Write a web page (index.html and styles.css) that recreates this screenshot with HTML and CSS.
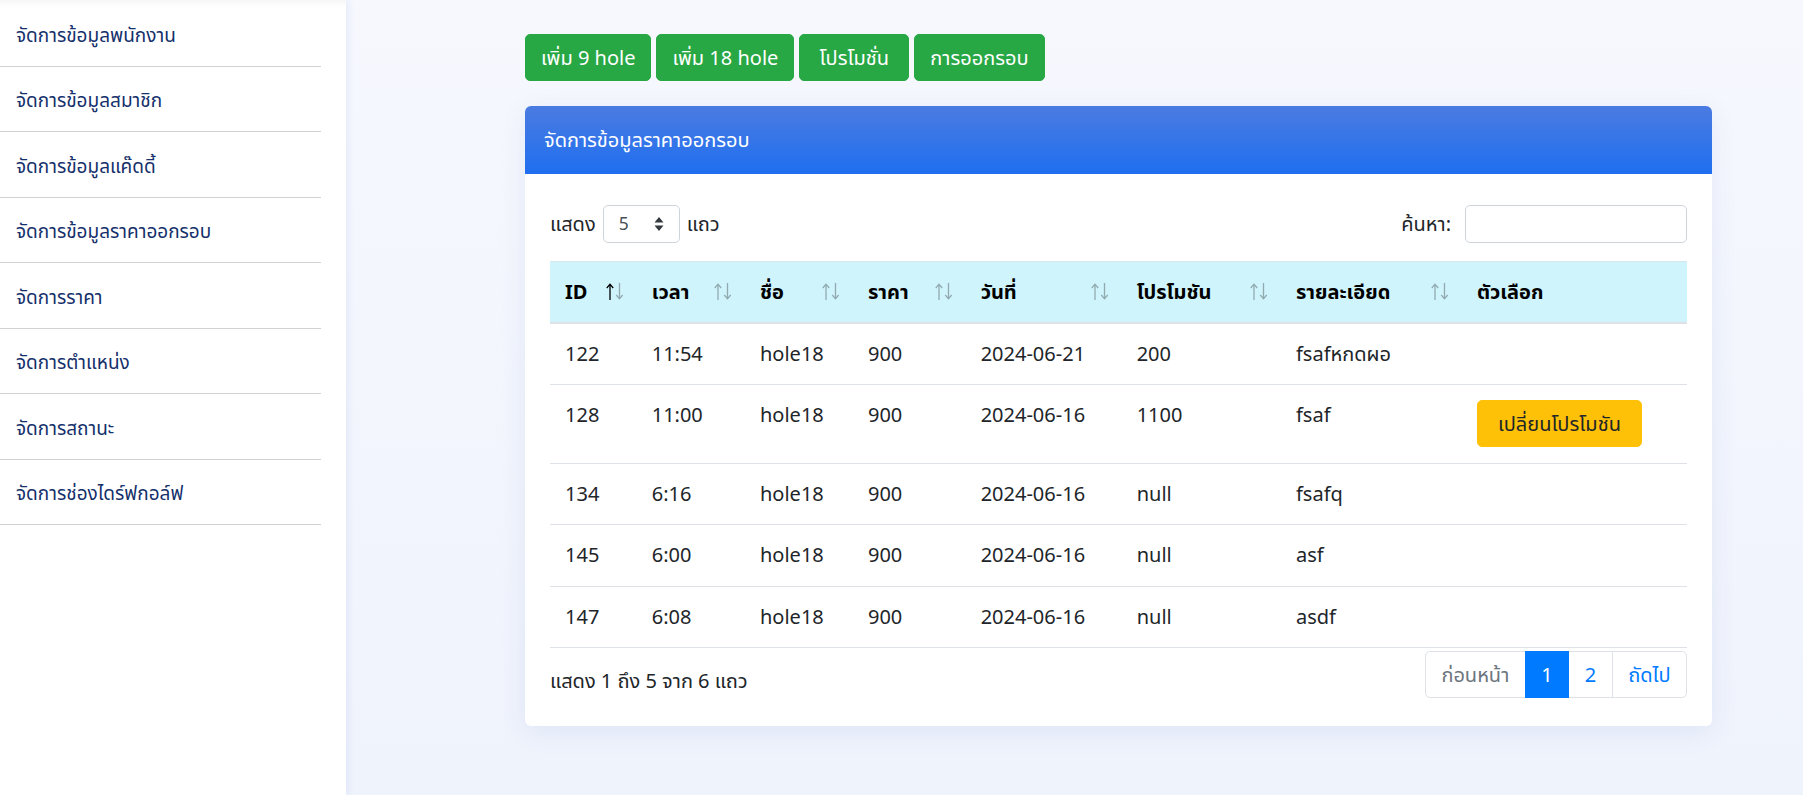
FILE: index.html
```html
<!DOCTYPE html>
<html lang="th">
<head>
<meta charset="utf-8">
<title>จัดการข้อมูลราคาออกรอบ</title>
<link rel="stylesheet" href="styles.css">
</head>
<body>
<div class="layout">
  <aside class="sidebar">
    <ul class="nav">
      <li><a class="nav-link">จัดการข้อมูลพนักงาน</a></li>
      <li><a class="nav-link">จัดการข้อมูลสมาชิก</a></li>
      <li><a class="nav-link">จัดการข้อมูลแค๊ดดี้</a></li>
      <li><a class="nav-link">จัดการข้อมูลราคาออกรอบ</a></li>
      <li><a class="nav-link">จัดการราคา</a></li>
      <li><a class="nav-link">จัดการตำแหน่ง</a></li>
      <li><a class="nav-link">จัดการสถานะ</a></li>
      <li><a class="nav-link">จัดการช่องไดร์ฟกอล์ฟ</a></li>
    </ul>
  </aside>
  <main class="main">
    <div class="actions">
      <button class="btn btn-green">เพิ่ม 9 hole</button>
      <button class="btn btn-green">เพิ่ม 18 hole</button>
      <button class="btn btn-green btn-promo">โปรโมชั่น</button>
      <button class="btn btn-green btn-round">การออกรอบ</button>
    </div>
    <section class="card">
      <div class="card-header">จัดการข้อมูลราคาออกรอบ</div>
      <div class="card-body">
        <div class="dt-top">
          <label class="dt-length">แสดง <span class="select"><span class="select-val">5</span><svg class="select-arrows" width="10" height="14" viewBox="0 0 10 14"><path d="M5 0 L9.5 5.5 L0.5 5.5 Z M5 14 L9.5 8.5 L0.5 8.5 Z" fill="#343a40"/></svg></span> แถว</label>
          <label class="dt-search">ค้นหา: <span class="search-input"></span></label>
        </div>
        <table class="dt-table">
          <colgroup>
            <col class="c-id"><col class="c-time"><col class="c-name"><col class="c-price"><col class="c-date"><col class="c-promo"><col class="c-detail"><col class="c-opt">
          </colgroup>
          <thead>
            <tr>
              <th class="sort sort-asc">ID<svg class="sort-icon" width="18" height="17" viewBox="0 0 18 17"><g class="up"><path d="M4 1.5V17M0.8 5L4 1.2L7.2 5"/></g><g class="down"><path d="M13.5 0V15.5M10.3 12L13.5 15.8L16.7 12"/></g></svg></th>
              <th class="sort">เวลา<svg class="sort-icon" width="18" height="17" viewBox="0 0 18 17"><g class="up"><path d="M4 1.5V17M0.8 5L4 1.2L7.2 5"/></g><g class="down"><path d="M13.5 0V15.5M10.3 12L13.5 15.8L16.7 12"/></g></svg></th>
              <th class="sort">ชื่อ<svg class="sort-icon" width="18" height="17" viewBox="0 0 18 17"><g class="up"><path d="M4 1.5V17M0.8 5L4 1.2L7.2 5"/></g><g class="down"><path d="M13.5 0V15.5M10.3 12L13.5 15.8L16.7 12"/></g></svg></th>
              <th class="sort">ราคา<svg class="sort-icon" width="18" height="17" viewBox="0 0 18 17"><g class="up"><path d="M4 1.5V17M0.8 5L4 1.2L7.2 5"/></g><g class="down"><path d="M13.5 0V15.5M10.3 12L13.5 15.8L16.7 12"/></g></svg></th>
              <th class="sort">วันที่<svg class="sort-icon" width="18" height="17" viewBox="0 0 18 17"><g class="up"><path d="M4 1.5V17M0.8 5L4 1.2L7.2 5"/></g><g class="down"><path d="M13.5 0V15.5M10.3 12L13.5 15.8L16.7 12"/></g></svg></th>
              <th class="sort">โปรโมชัน<svg class="sort-icon" width="18" height="17" viewBox="0 0 18 17"><g class="up"><path d="M4 1.5V17M0.8 5L4 1.2L7.2 5"/></g><g class="down"><path d="M13.5 0V15.5M10.3 12L13.5 15.8L16.7 12"/></g></svg></th>
              <th class="sort">รายละเอียด<svg class="sort-icon" width="18" height="17" viewBox="0 0 18 17"><g class="up"><path d="M4 1.5V17M0.8 5L4 1.2L7.2 5"/></g><g class="down"><path d="M13.5 0V15.5M10.3 12L13.5 15.8L16.7 12"/></g></svg></th>
              <th>ตัวเลือก</th>
            </tr>
          </thead>
          <tbody>
            <tr><td>122</td><td>11:54</td><td>hole18</td><td>900</td><td>2024-06-21</td><td>200</td><td>fsafหกดผอ</td><td></td></tr>
            <tr><td>128</td><td>11:00</td><td>hole18</td><td>900</td><td>2024-06-16</td><td>1100</td><td>fsaf</td><td><button class="btn btn-yellow">เปลี่ยนโปรโมชัน</button></td></tr>
            <tr><td>134</td><td>6:16</td><td>hole18</td><td>900</td><td>2024-06-16</td><td>null</td><td>fsafq</td><td></td></tr>
            <tr><td>145</td><td>6:00</td><td>hole18</td><td>900</td><td>2024-06-16</td><td>null</td><td>asf</td><td></td></tr>
            <tr><td>147</td><td>6:08</td><td>hole18</td><td>900</td><td>2024-06-16</td><td>null</td><td>asdf</td><td></td></tr>
          </tbody>
        </table>
        <div class="dt-bottom">
          <div class="dt-info">แสดง 1 ถึง 5 จาก 6 แถว</div>
          <ul class="pagination">
            <li class="page-item disabled"><a class="page-link">ก่อนหน้า</a></li>
            <li class="page-item active"><a class="page-link">1</a></li>
            <li class="page-item"><a class="page-link">2</a></li>
            <li class="page-item"><a class="page-link">ถัดไป</a></li>
          </ul>
        </div>
      </div>
    </section>
  </main>
</div>
</body>
</html>
```
FILE: styles.css
```css
* { box-sizing: border-box; }

html, body {
  margin: 0;
  padding: 0;
}

body {
  font-family: "Noto Sans", "Noto Sans Thai", "Leelawadee UI", Tahoma, "DejaVu Sans", sans-serif;
  font-size: 20px;
  line-height: 1.5;
  color: #212529;
  background: linear-gradient(180deg, #f6f8fe 0%, #eff3fc 100%);
  min-height: 795px;
}

.layout {
  display: flex;
  min-height: 795px;
}

/* Sidebar */
.sidebar {
  width: 346px;
  flex: 0 0 346px;
  background: #fff;
  padding-right: 25px;
  padding-top: 1px;
  box-shadow: 3px 0 6px rgba(60, 100, 200, 0.08), inset 0 10px 8px -8px rgba(0, 0, 0, 0.05);
}

.nav {
  list-style: none;
  margin: 0;
  padding: 0;
}

.nav li {
  border-bottom: 1px solid #d2d2d2;
}

.nav-link {
  display: block;
  padding: 19.5px 16px 17px;
  line-height: 28px;
  font-size: 19px;
  color: #15306b;
  text-decoration: none;
}

/* Main */
.main {
  flex: 1;
  padding: 34px 91px 40px 179px;
}

.actions {
  display: flex;
  gap: 5px;
  margin-bottom: 24.5px;
}

.btn {
  font-family: inherit;
  font-size: 20px;
  line-height: 30px;
  padding: 7.5px 15px;
  border: 1px solid transparent;
  border-radius: 5px;
  cursor: pointer;
  text-align: center;
}

.btn-green {
  background: #28a745;
  border-color: #28a745;
  color: #fff;
}

.btn-promo {
  min-width: 110px;
}

.btn-round {
  min-width: 130px;
}

.btn-yellow {
  background: #ffc107;
  border-color: #ffc107;
  color: #212529;
  min-width: 165px;
}

/* Card */
.card {
  background: #fff;
  border-radius: 6px;
  box-shadow: 0 6px 28px rgba(30, 60, 160, 0.08);
}

.card-header {
  background: linear-gradient(180deg, #4b7be1 0%, #1f6ff0 100%);
  color: #fff;
  padding: 19px 19px;
  line-height: 30px;
  border-radius: 6px 6px 0 0;
}

.card-body {
  padding: 25px;
}

.dt-top {
  display: flex;
  justify-content: space-between;
  align-items: center;
  height: 38px;
  margin-top: 6px;
}

.dt-length,
.dt-search {
  display: flex;
  align-items: center;
}

.select {
  display: inline-flex;
  align-items: center;
  justify-content: space-between;
  width: 77.5px;
  height: 38px;
  margin: 0 6.5px 0 7px;
  padding: 0 15px 0 15px;
  border: 1px solid #ced4da;
  border-radius: 5px;
  font-size: 17.5px;
  color: #495057;
}

.select-arrows {
  display: block;
}

.search-input {
  display: inline-block;
  width: 222px;
  height: 38px;
  margin-left: 14px;
  border: 1px solid #ced4da;
  border-radius: 5px;
}

/* Table */
.dt-table {
  width: 100%;
  margin-top: 18px;
  border-collapse: collapse;
  table-layout: fixed;
  border-bottom: 1px solid #dee2e6;
}

.c-id { width: 86.7px; }
.c-time { width: 108.3px; }
.c-name { width: 108px; }
.c-price { width: 112.7px; }
.c-date { width: 156px; }
.c-promo { width: 159.3px; }
.c-detail { width: 181px; }
.c-opt { width: 225px; }

.dt-table th {
  position: relative;
  text-align: left;
  font-weight: 700;
  color: #000;
  background: #cff4fc;
  padding: 15px 30px 15px 15px;
  border-top: 1px solid #d6e6ec;
  border-bottom: 2px solid #dee2e6;
  white-space: nowrap;
}

.sort-icon {
  position: absolute;
  right: 12.5px;
  top: 21.5px;
  fill: none;
  stroke-width: 1.3;
}

.sort-icon .up,
.sort-icon .down {
  stroke: #000;
  opacity: 0.3;
}

.sort-asc .sort-icon .up {
  opacity: 1;
}

.dt-table td {
  padding: 15.25px 15px;
  vertical-align: top;
  border-top: 1px solid #dee2e6;
}

/* Bottom */
.dt-bottom {
  display: flex;
  justify-content: space-between;
  align-items: flex-start;
}

.dt-info {
  padding-top: 18px;
}

.pagination {
  display: flex;
  list-style: none;
  margin: 3px 0 3px;
  padding: 0;
}

.page-link {
  display: block;
  padding: 7.5px 15.5px;
  line-height: 30px;
  color: #007bff;
  background: #fff;
  border: 1px solid #dee2e6;
  margin-left: -1px;
}

.page-item:first-child .page-link {
  margin-left: 0;
  border-radius: 5px 0 0 5px;
}

.page-item:last-child .page-link {
  border-radius: 0 5px 5px 0;
}

.page-item.disabled .page-link {
  color: #6c757d;
}

.page-item.active .page-link {
  background: #007bff;
  border-color: #007bff;
  color: #fff;
  position: relative;
  z-index: 1;
}
```
